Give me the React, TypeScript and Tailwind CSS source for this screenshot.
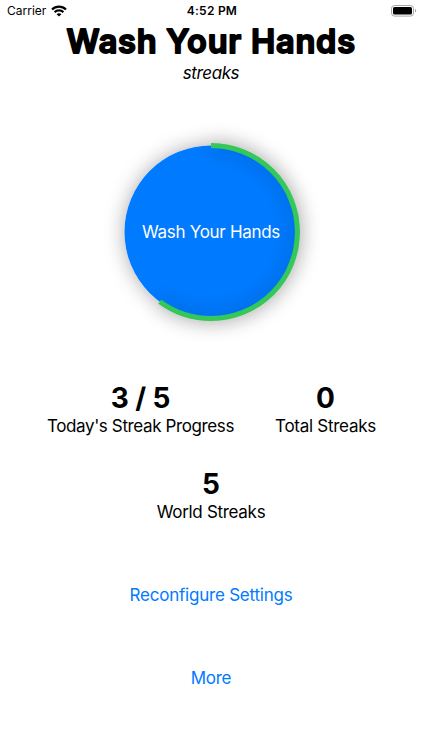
const RING_RADIUS = 86.5;
const RING_LENGTH = 2 * Math.PI * RING_RADIUS;

interface StatProps {
  value: string;
  label: string;
  className: string;
  labelClassName: string;
}

function WifiIcon() {
  return (
    <svg width="16" height="12" viewBox="0 0 16 12" fill="none" stroke="#000" strokeWidth="2.2">
      <path d="M1 4.5C4.9.7 11.1.7 15 4.5" />
      <path d="M3.6 7.1c2.5-2.4 6.3-2.4 8.8 0" />
      <path d="M8 11.6 5.6 9.2c1.3-1.2 3.5-1.2 4.8 0z" fill="#000" stroke="none" />
    </svg>
  );
}

function BatteryIcon() {
  return (
    <svg width="26" height="12" viewBox="0 0 26 12" fill="none">
      <rect x=".5" y=".5" width="22" height="10.6" rx="3" stroke="#a6a6a6" />
      <rect x="2" y="2" width="19" height="7.6" rx="1.6" fill="#000" />
      <path d="M24 4v3.6c1.7-.7 1.7-2.9 0-3.6z" fill="#a0a0a0" />
    </svg>
  );
}

function StatusBar() {
  return (
    <header className="grid h-[22px] grid-cols-3 items-center pr-[5px] pl-[7px] text-xs leading-[22px]">
      <div className="flex items-center gap-[5px]">
        <span>Carrier</span>
        <WifiIcon />
      </div>
      <span className="text-center font-semibold tracking-[0.02em]">4:52 PM</span>
      <div className="flex justify-end">
        <BatteryIcon />
      </div>
    </header>
  );
}

// The round-joined outline gives the lettering its soft corners
function Title() {
  return (
    <h1 className="h-10">
      <svg width="300" height="40" viewBox="0 0 300 40">
        <text
          x="5.5"
          y="31"
          textLength="288.5"
          stroke="#000"
          strokeWidth="1.8"
          strokeLinejoin="round"
          strokeLinecap="round"
          className="text-[32.5px] font-semibold"
        >
          Wash Your Hands
        </text>
      </svg>
    </h1>
  );
}

function ProgressButton({ done, goal }: { done: number; goal: number }) {
  return (
    <button className="grid h-[232px] w-[232px] place-items-center rounded-full">
      <svg className="col-start-1 row-start-1 overflow-visible" width="232" height="232" viewBox="0 0 232 232">
        <defs>
          <filter id="ring-shadow" x="-20%" y="-20%" width="140%" height="140%">
            <feDropShadow dx="0" dy="0" stdDeviation="10" floodColor="#000" floodOpacity="0.33" />
          </filter>
        </defs>
        <circle cx="116" cy="116" r={RING_RADIUS} fill="#007aff" filter="url(#ring-shadow)" />
        <circle
          cx="116"
          cy="116"
          r={RING_RADIUS}
          fill="none"
          stroke="#34c759"
          strokeWidth="5"
          strokeDasharray={`${(RING_LENGTH * done) / goal} ${RING_LENGTH}`}
          transform="rotate(-90 116 116)"
          filter="url(#ring-shadow)"
        />
      </svg>
      <span className="col-start-1 row-start-1 pt-0.5 text-[17px] tracking-[-0.3px] whitespace-nowrap text-white">
        Wash Your Hands
      </span>
    </button>
  );
}

function Stat({ value, label, className, labelClassName }: StatProps) {
  return (
    <div className={`flex flex-col items-center ${className}`}>
      <span className="text-[28px] leading-[34px] font-bold tracking-[-0.1px]">{value}</span>
      <span className={`text-[17px] leading-[21px] whitespace-nowrap ${labelClassName}`}>{label}</span>
    </div>
  );
}

export default function App() {
  return (
    <div className="h-[750px] w-[422px] overflow-hidden bg-white font-['Inter',sans-serif] text-black">
      <StatusBar />
      <main className="flex flex-col items-center">
        <Title />
        <p className="mt-px h-[21px] text-[17px] leading-[21px] tracking-[-0.4px] italic">streaks</p>
        <div className="mt-8">
          <ProgressButton done={3} goal={5} />
        </div>
        <section className="mt-[33px] flex w-full pl-[47px]">
          <Stat
            value="3 / 5"
            label="Today's Streak Progress"
            className="w-[187px]"
            labelClassName="pt-px tracking-[-0.38px]"
          />
          <Stat
            value="0"
            label="Total Streaks"
            className="ml-[41px] w-[101px]"
            labelClassName="pt-px tracking-[-0.28px]"
          />
        </section>
        <Stat value="5" label="World Streaks" className="mt-[30px]" labelClassName="pt-px tracking-[-0.3px]" />
        <button className="mt-[62px] h-[21px] text-[17px] leading-[21px] tracking-[-0.22px] text-[#007aff]">
          Reconfigure Settings
        </button>
        <button className="mt-[62px] h-[21px] text-[17px] leading-[21px] tracking-[-0.3px] text-[#007aff]">More</button>
      </main>
    </div>
  );
}
